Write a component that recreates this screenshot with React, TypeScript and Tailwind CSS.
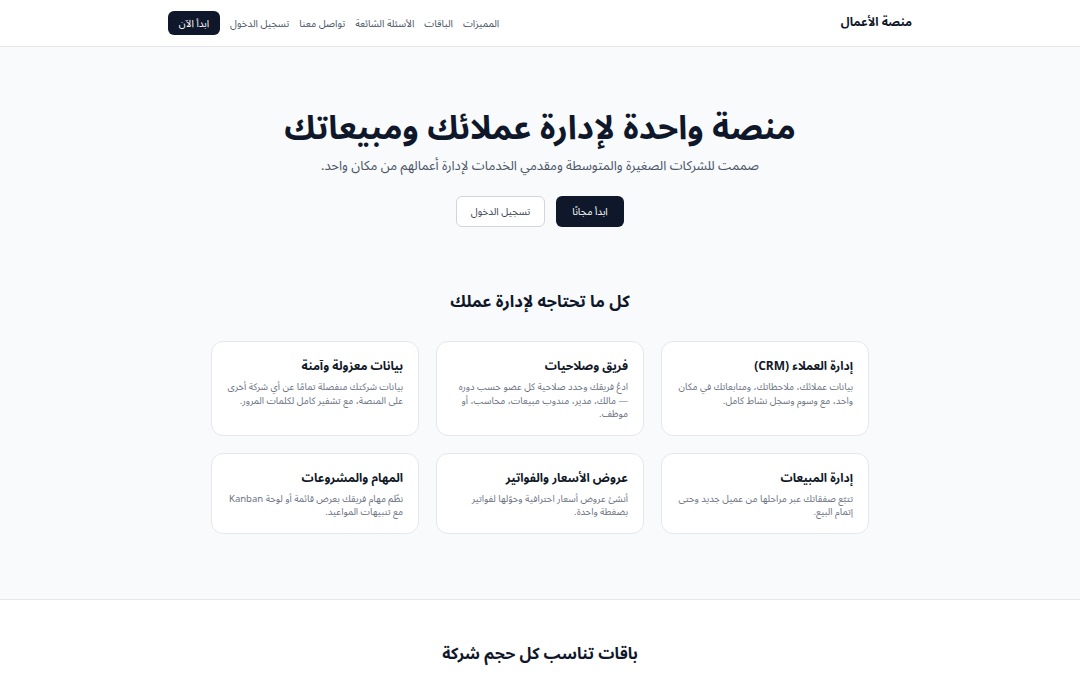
import { ReactNode } from 'react';

const features = [
  {
    title: 'إدارة العملاء (CRM)',
    text: 'بيانات عملائك، ملاحظاتك، ومتابعاتك في مكان واحد، مع وسوم وسجل نشاط كامل.',
  },
  {
    title: 'فريق وصلاحيات',
    text: 'ادعُ فريقك وحدد صلاحية كل عضو حسب دوره — مالك، مدير، مندوب مبيعات، محاسب، أو موظف.',
  },
  {
    title: 'بيانات معزولة وآمنة',
    text: 'بيانات شركتك منفصلة تمامًا عن أي شركة أخرى على المنصة، مع تشفير كامل لكلمات المرور.',
  },
  {
    title: 'إدارة المبيعات',
    text: 'تتبّع صفقاتك عبر مراحلها من عميل جديد وحتى إتمام البيع.',
  },
  {
    title: 'عروض الأسعار والفواتير',
    text: 'أنشئ عروض أسعار احترافية وحوّلها لفواتير بضغطة واحدة.',
  },
  {
    title: 'المهام والمشروعات',
    text: 'نظّم مهام فريقك بعرض قائمة أو لوحة Kanban مع تنبيهات المواعيد.',
  },
];

function Card({ title, children }: { title: string; children: ReactNode }) {
  return (
    <div className="bg-white border border-gray-200 rounded-xl px-[15px] pt-4 pb-[13px]">
      <h3 className="text-[12px] leading-[18px] font-bold text-[#111827]">{title}</h3>
      <p className="mt-[5px] text-[9.5px] leading-[13.5px] text-gray-500">{children}</p>
    </div>
  );
}

export default function App() {
  return (
    <div dir="rtl" className="min-h-screen bg-white text-[#0f172a] font-['Noto_Sans_Arabic','Noto_Kufi_Arabic','DejaVu_Sans',sans-serif]">
      {/* Header */}
      <header className="bg-white border-b border-gray-200">
        <div className="max-w-[768px] mx-auto px-3 h-[46px] flex items-center justify-between">
          <div className="text-[12px] font-bold text-[#0f172a]">منصة الأعمال</div>
          <nav className="flex items-center gap-2.5 text-[10px] text-gray-600">
            <a>المميزات</a>
            <a>الباقات</a>
            <a>الأسئلة الشائعة</a>
            <a>تواصل معنا</a>
            <a>تسجيل الدخول</a>
            <button className="bg-[#0f172a] text-white rounded-md w-[52px] h-6 text-[10px]">ابدأ الآن</button>
          </nav>
        </div>
      </header>

      <div className="bg-[#f8fafc] border-b border-gray-200">
        {/* Hero */}
        <section className="pt-[55px] pb-[61px] text-center">
          <h1 className="text-[33px] leading-[54px] font-bold text-[#0f172a]">منصة واحدة لإدارة عملائك ومبيعاتك</h1>
          <p className="text-[13px] leading-5 text-gray-600">صممت للشركات الصغيرة والمتوسطة ومقدمي الخدمات لإدارة أعمالهم من مكان واحد.</p>
          <div className="mt-5 flex justify-center gap-[11px]">
            <button className="bg-[#0f172a] text-white rounded-md h-[31px] w-[68px] text-[10px]">ابدأ مجانًا</button>
            <button className="bg-white border border-gray-300 text-gray-700 rounded-md h-[31px] w-[89px] text-[10px]">تسجيل الدخول</button>
          </div>
        </section>

        {/* Features */}
        <section className="pb-[65px]">
          <h2 className="text-center text-[16.5px] leading-7 font-bold text-[#0f172a]">كل ما تحتاجه لإدارة عملك</h2>
          <div className="mt-[25px] w-[658px] mx-auto grid grid-cols-3 gap-[17px]">
            {features.map((f) => (
              <Card key={f.title} title={f.title}>
                {f.text}
              </Card>
            ))}
          </div>
        </section>
      </div>

      {/* Plans */}
      <section className="pt-[40px] pb-10 text-center">
        <h2 className="text-[16px] leading-7 font-bold text-[#0f172a]">باقات تناسب كل حجم شركة</h2>
      </section>
    </div>
  );
}
